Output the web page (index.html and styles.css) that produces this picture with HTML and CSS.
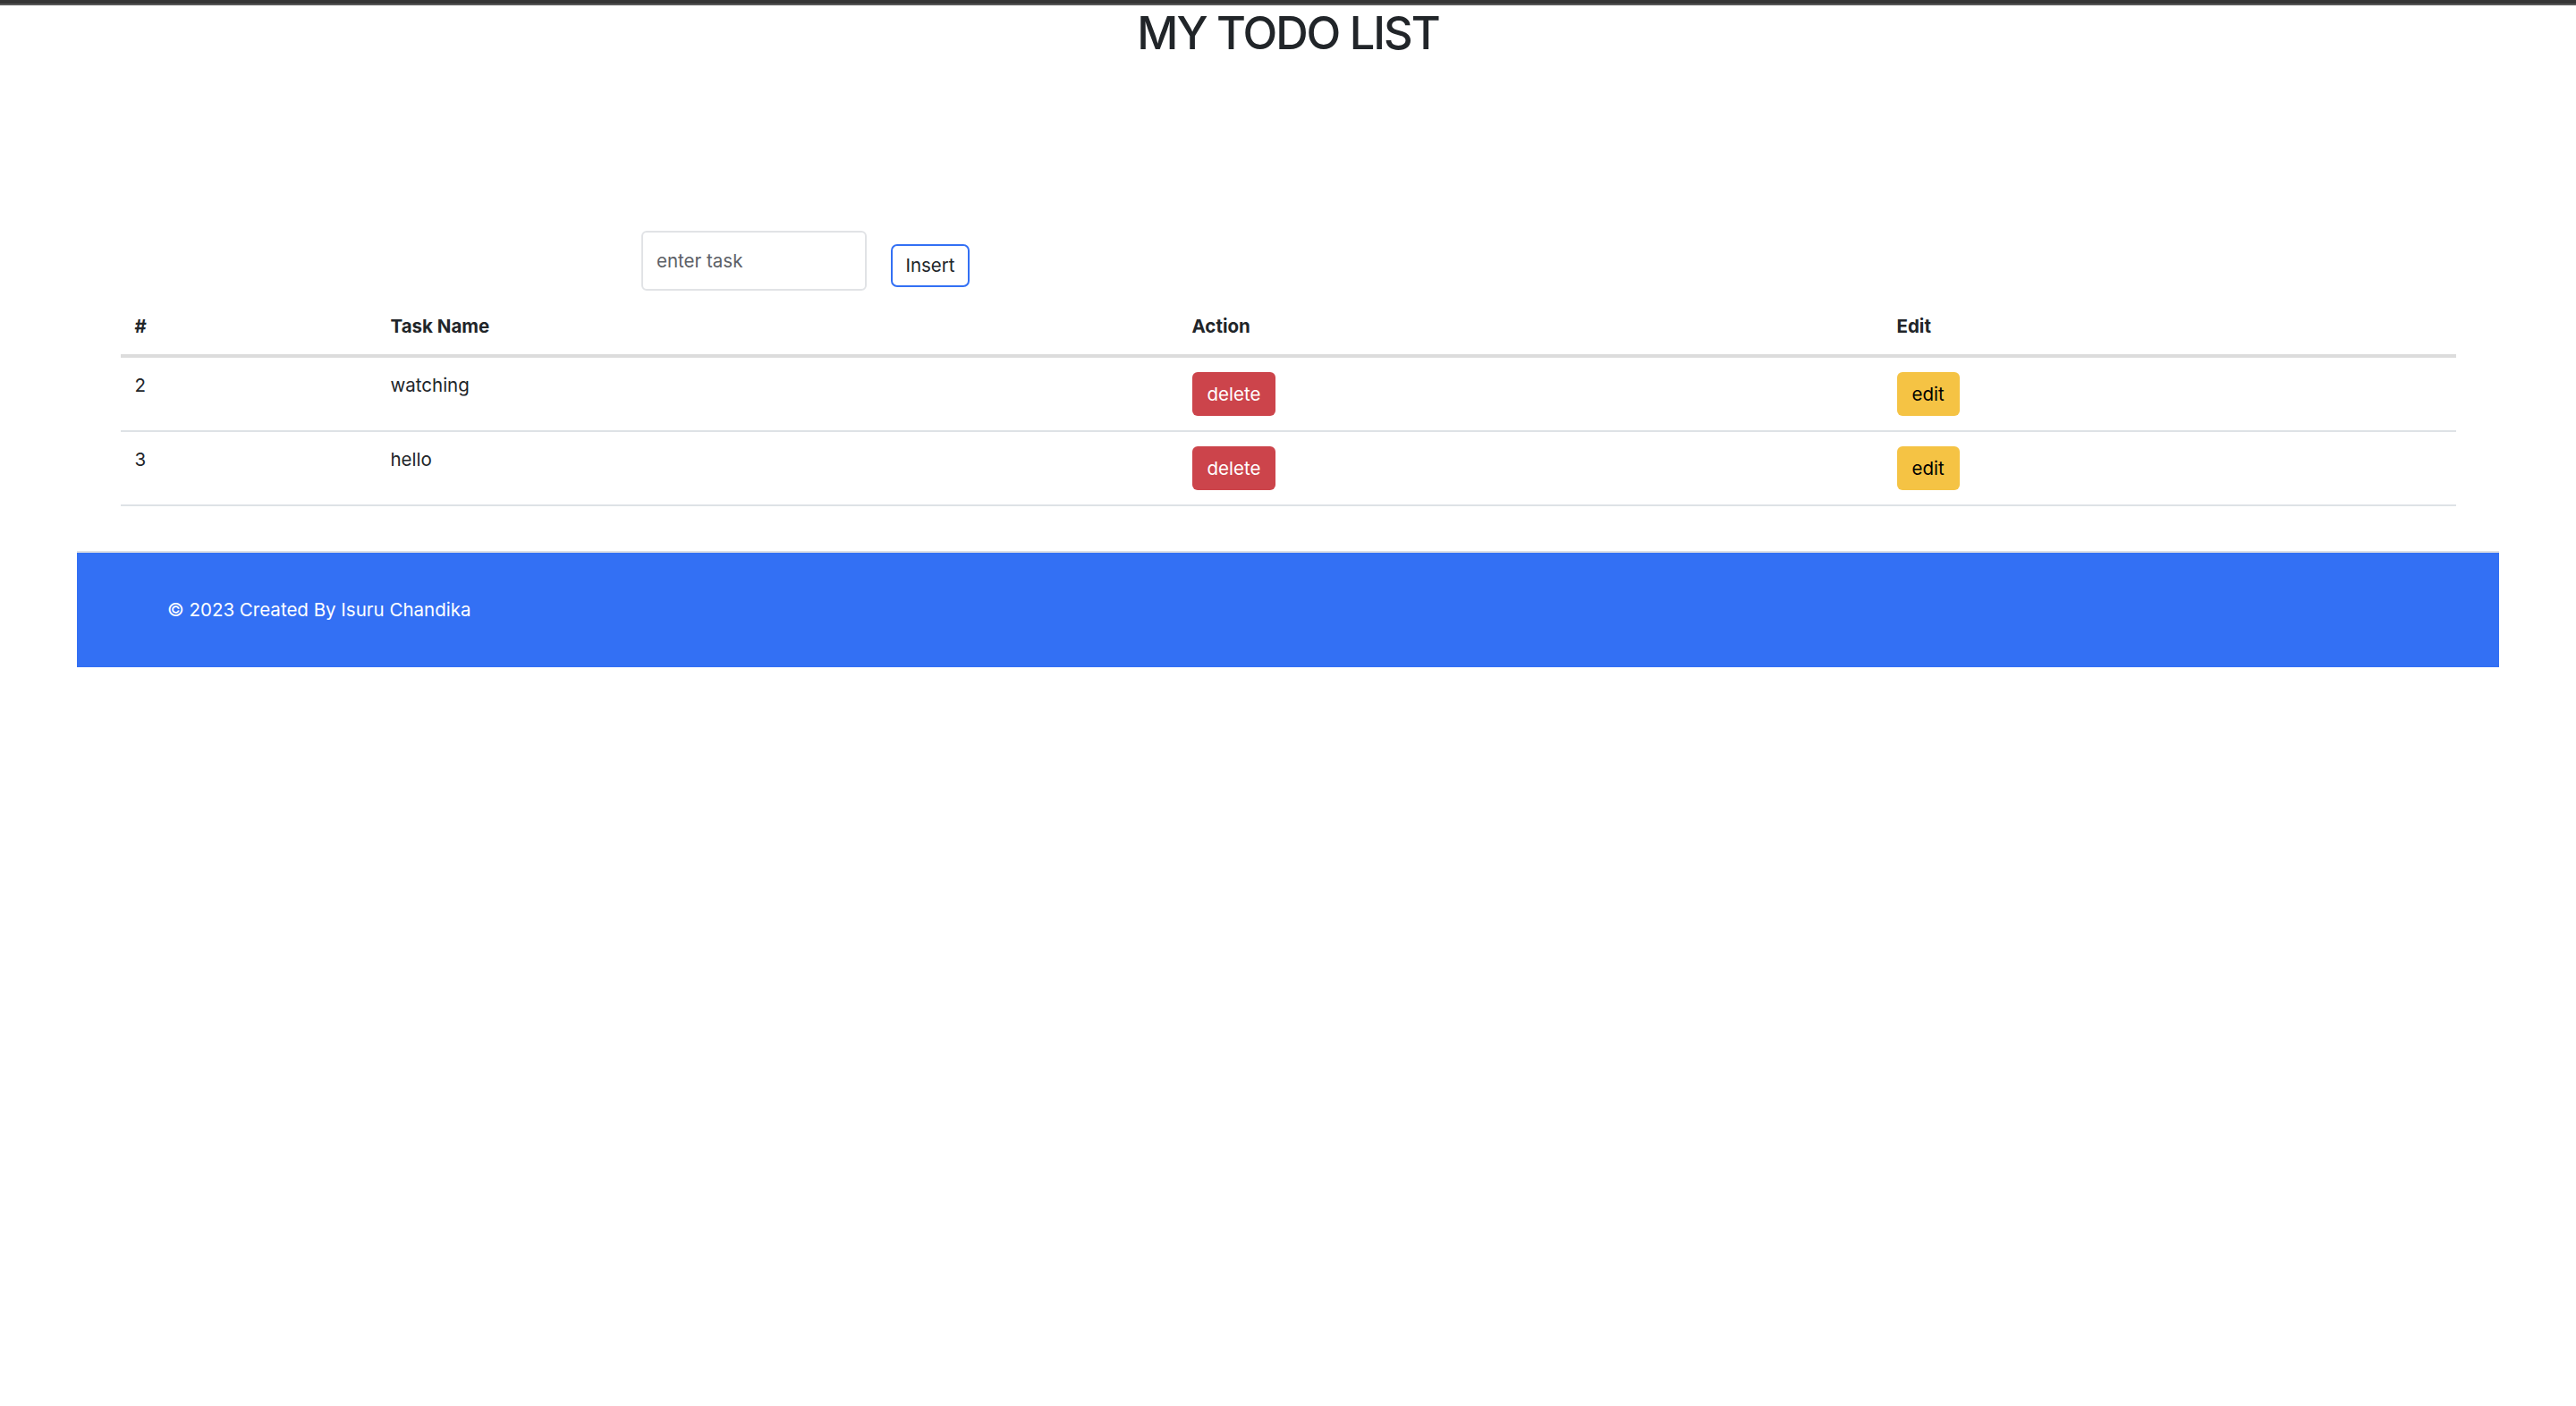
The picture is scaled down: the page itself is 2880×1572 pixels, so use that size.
FILE: index.html
```html
<!DOCTYPE html>
<html lang="en">
<head>
<meta charset="utf-8">
<title>My Todo List</title>
<link rel="stylesheet" href="styles.css">
</head>
<body>
<div class="topbar"></div>
<h1 class="title">MY TODO LIST</h1>
<div class="form-row">
  <input class="task-input" type="text" placeholder="enter task">
  <button class="btn-insert" type="button">Insert</button>
</div>
<div class="container">
  <table class="todo-table">
    <thead>
      <tr>
        <th class="col-num">#</th>
        <th class="col-name">Task Name</th>
        <th class="col-action">Action</th>
        <th class="col-edit">Edit</th>
      </tr>
    </thead>
    <tbody>
      <tr>
        <td>2</td>
        <td>watching</td>
        <td><button class="btn btn-delete" type="button">delete</button></td>
        <td><button class="btn btn-edit" type="button">edit</button></td>
      </tr>
      <tr>
        <td>3</td>
        <td>hello</td>
        <td><button class="btn btn-delete" type="button">delete</button></td>
        <td><button class="btn btn-edit" type="button">edit</button></td>
      </tr>
    </tbody>
  </table>
</div>
<footer class="footer">
  <span class="footer-text">© 2023 Created By Isuru Chandika</span>
</footer>
</body>
</html>
```
FILE: styles.css
```css
html, body {
  margin: 0;
  padding: 0;
  background: #ffffff;
}

body {
  font-family: Inter, "Noto Sans", "Liberation Sans", sans-serif;
  font-size: 20.5px;
  line-height: 30.75px;
  color: #212529;
}

.topbar {
  height: 4px;
  background: #363636;
  border-bottom: 2px solid #575757;
}

.title {
  margin: 0;
  font-size: 50.5px;
  font-weight: 500;
  line-height: 61.5px;
  letter-spacing: -2px;
  text-align: center;
  color: #212529;
}

.form-row {
  display: flex;
  align-items: flex-start;
  gap: 27px;
  margin-top: 190px;
  padding-left: 717px;
}

.task-input {
  box-sizing: border-box;
  width: 252px;
  height: 67px;
  margin: 0;
  padding: 0 15px;
  border: 2px solid #e1e3e6;
  border-radius: 6px;
  font-family: Inter, "Noto Sans", sans-serif;
  font-size: 20.5px;
  color: #212529;
  background: #fff;
  outline: none;
}

.task-input::placeholder {
  color: #5c6066;
}

.btn-insert {
  box-sizing: border-box;
  width: 88px;
  height: 48px;
  margin-top: 15px;
  padding: 0;
  border: 2px solid #3370f4;
  border-radius: 7px;
  background: #fff;
  font-family: Inter, "Noto Sans", sans-serif;
  font-size: 20.5px;
  color: #212529;
}

.container {
  margin: 9px 86px 0;
  padding: 0 48.5px;
}

.todo-table {
  width: 100%;
  border-collapse: collapse;
  table-layout: fixed;
}

.todo-table th,
.todo-table td {
  box-sizing: border-box;
  padding: 16px;
  text-align: left;
  vertical-align: top;
}

.col-num { width: 286px; }
.col-name { width: 896px; }
.col-action { width: 788px; }
.col-edit { width: auto; }

.todo-table th {
  font-weight: 700;
  border-bottom: 4px solid #dcdcdc;
}

.todo-table td {
  font-weight: 400;
  border-bottom: 2px solid #dee2e6;
}

.btn {
  display: inline-block;
  box-sizing: border-box;
  height: 49px;
  padding: 0 17px;
  margin: 0;
  border: none;
  border-radius: 6px;
  font-family: Inter, "Noto Sans", sans-serif;
  font-size: 20.5px;
  line-height: 49px;
  vertical-align: top;
}

.btn-delete {
  background: #cc444b;
  color: #ffffff;
}

.btn-edit {
  background: #f5c344;
  color: #000000;
}

.footer {
  display: flex;
  align-items: center;
  height: 128px;
  margin: 50px 86px 0;
  padding-left: 101px;
  background: #3370f4;
  border-top: 2px solid #dfe0e3;
  color: #ffffff;
  font-size: 20.5px;
}
```
